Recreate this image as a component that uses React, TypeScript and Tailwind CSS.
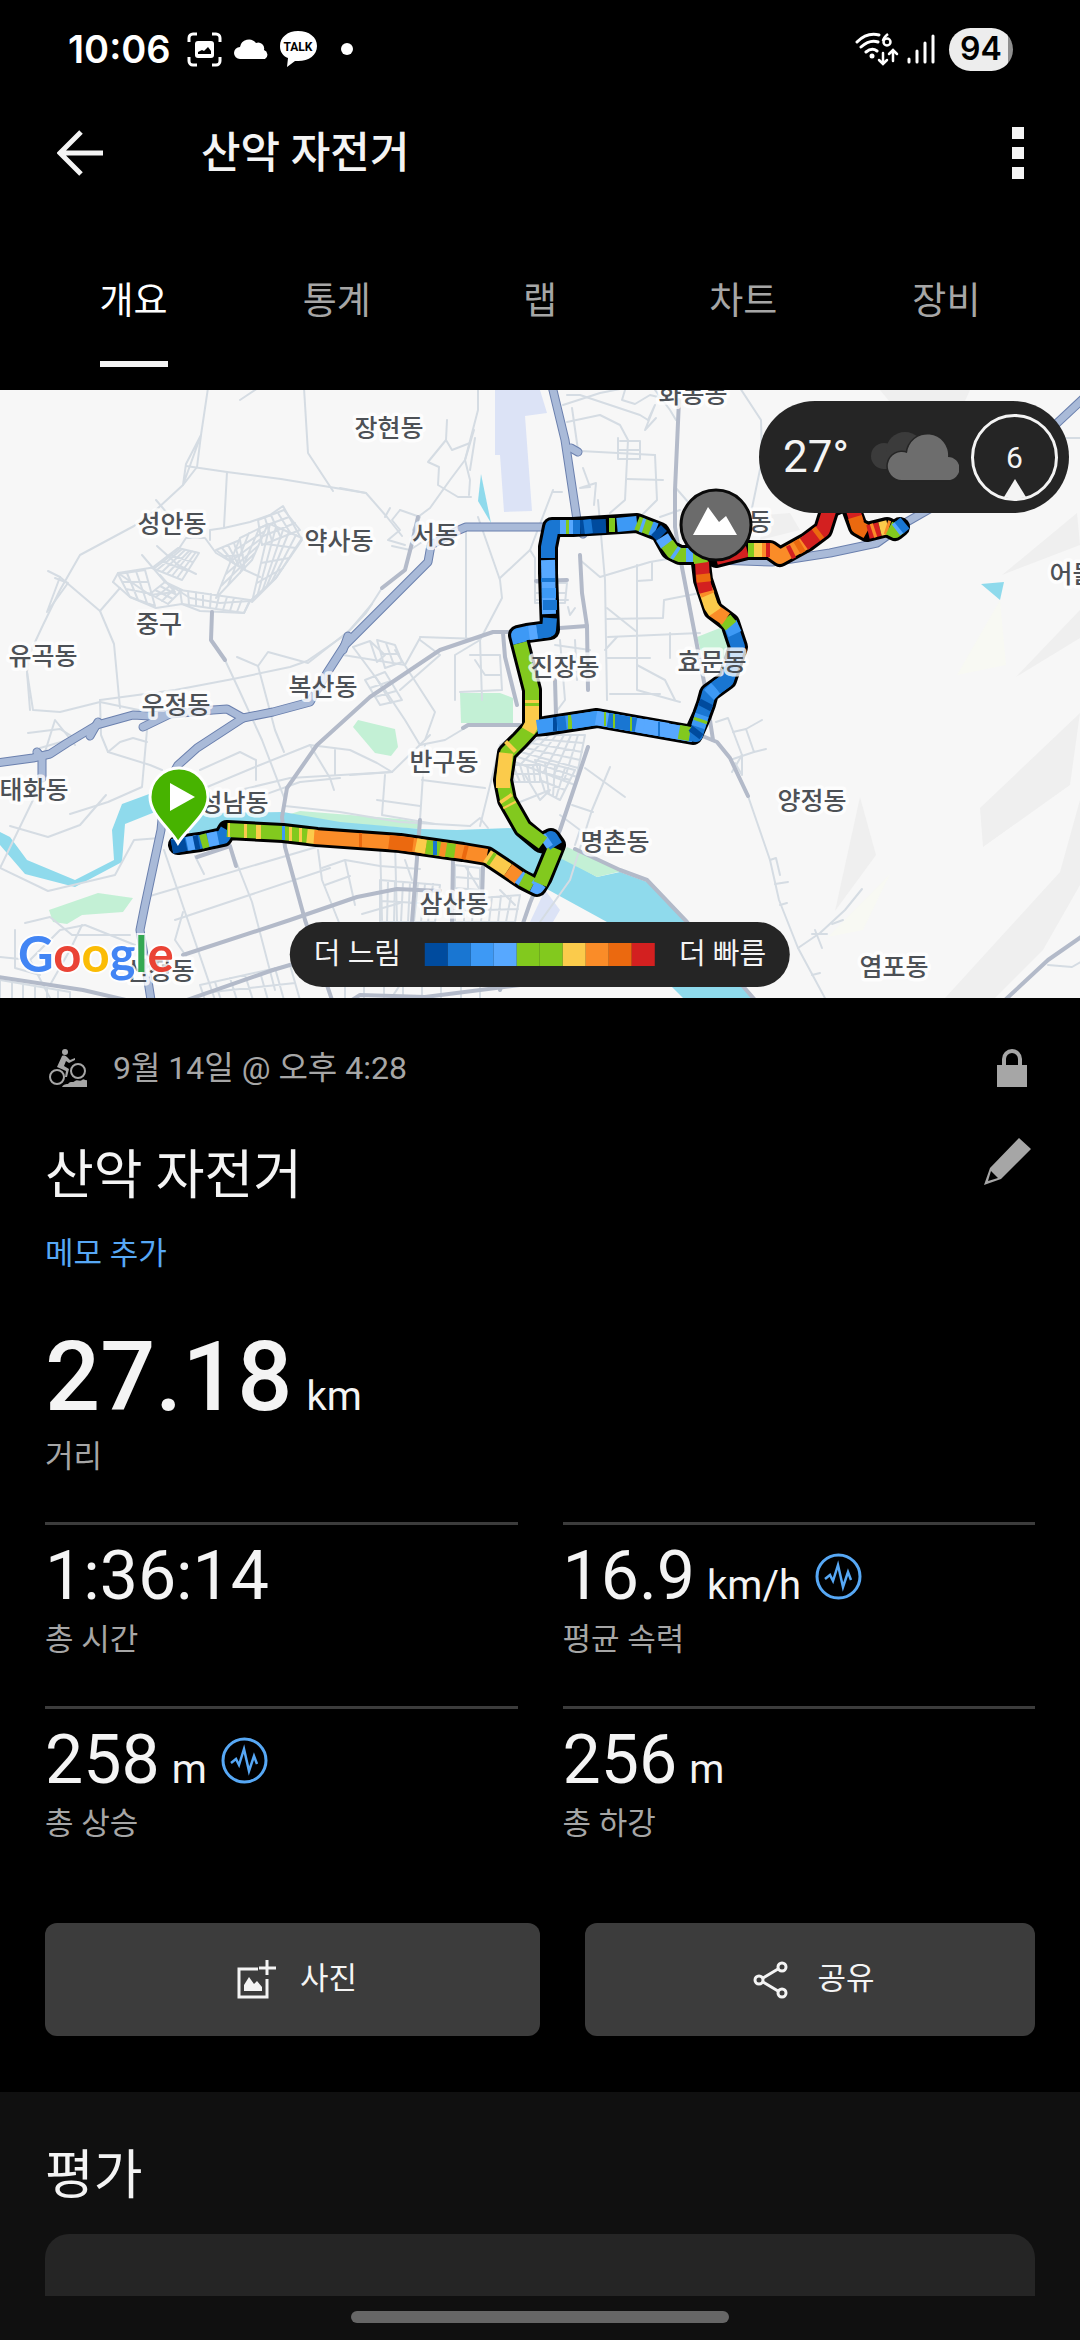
import { useState } from "react";

const TABS = ["개요", "통계", "랩", "차트", "장비"];

const SPEED_COLORS = [
  "bg-[#004b9e]",
  "bg-[#1976d2]",
  "bg-[#3d99f5]",
  "bg-[#57a8ff]",
  "bg-[#82c91e]",
  "bg-[#82c91e]",
  "bg-[#fbcb4b]",
  "bg-[#fa8c28]",
  "bg-[#eb690f]",
  "bg-[#d32020]",
];

const NAVY = "#004b9e";
const BLUE = "#1976d2";
const AZURE = "#3d99f5";
const SKY = "#57a8ff";
const GREEN = "#82c91e";
const YELLOW = "#fbcb4b";
const ORANGE = "#fa8c28";
const BURNT = "#eb690f";
const RED = "#d32020";

const ROUTE = [
  "178,845 200,842 223,837 227,830 283,833 317,837 400,843 463,852 487,856 523,880 537,887 543,877 556,845 551,838 541,843 523,828 507,800 503,780 507,753 520,740 532,727 532,690 520,643 518,635 527,633 550,630 548,573 548,547 552,527 573,527 637,523 660,532 670,550 680,555 702,555",
  "532,727 545,726 597,718 693,735 702,715 706,704 709,693 727,680 738,647 730,623 713,610 703,580 700,555",
  "716,558 747,550 770,550 780,557 807,542 823,530 830,508 848,500 858,527 867,532 887,527 895,531 900,527",
];

// [colour, points]: later entries are painted over earlier ones
const SPEED: [string, string][] = [
  [BLUE, "172,846 178,845 200,842 223,837 227,830"],
  [NAVY, "172,847 186,844"],
  [SKY, "187,844 197,842"],
  [NAVY, "194,843 199,842"],
  [GREEN, "201,842 208,840"],
  [SKY, "208,840 218,838"],
  [GREEN, "227,830 283,833 317,837"],
  [YELLOW, "228,830 230,830"],
  [YELLOW, "244,831 247,831"],
  [YELLOW, "256,832 261,832"],
  [AZURE, "282,833 285,833"],
  [YELLOW, "289,834 292,834"],
  [YELLOW, "299,835 302,835"],
  [YELLOW, "307,836 317,837"],
  [ORANGE, "314,837 400,843 463,852 487,856"],
  [BURNT, "359,840 362,840"],
  [BURNT, "389,842 413,845"],
  [YELLOW, "416,845 426,847"],
  [GREEN, "426,847 455,851"],
  [BLUE, "433,848 437,848"],
  [ORANGE, "440,849 446,850"],
  [BURNT, "463,852 467,853"],
  [YELLOW, "487,856 508,870"],
  [GREEN, "490,858 493,860"],
  [ORANGE, "508,870 519,878"],
  [SKY, "519,877 523,880"],
  [GREEN, "522,879 533,885"],
  [SKY, "533,885 537,887 540,883"],
  [GREEN, "540,884 543,877 555,848"],
  [BLUE, "556,846 551,838 545,842"],
  [SKY, "549,839 543,843"],
  [GREEN, "543,843 523,828 507,800 503,780 507,753 520,740 532,727 532,690 520,643"],
  [YELLOW, "510,806 509,804"],
  [YELLOW, "507,800 505,797"],
  [YELLOW, "503,788 503,780 506,753"],
  [YELLOW, "509,748 512,745"],
  [YELLOW, "528,731 532,724 532,700"],
  [GREEN, "532,706 532,703"],
  [AZURE, "520,643 518,635 527,633 550,630"],
  [BLUE, "537,632 549,630 550,618"],
  [SKY, "529,633 537,632"],
  [SKY, "549,614 548,560"],
  [BLUE, "550,610 550,600"],
  [AZURE, "549,598 549,588"],
  [BLUE, "548,582 548,578"],
  [BLUE, "548,558 548,547 552,527 560,527"],
  [SKY, "560,527 573,527"],
  [GREEN, "566,527 569,527"],
  [NAVY, "580,527 606,526"],
  [BLUE, "584,527 592,526"],
  [GREEN, "609,525 615,525"],
  [AZURE, "617,525 637,523"],
  [BLUE, "573,527 580,527"],
  [GREEN, "637,523 652,529"],
  [SKY, "641,525 644,526"],
  [AZURE, "651,528 656,530"],
  [NAVY, "656,530 662,536"],
  [SKY, "662,537 667,545"],
  [GREEN, "667,544 673,552 680,555 689,555"],
  [SKY, "674,552 677,554"],
  [SKY, "686,555 693,555"],
  [GREEN, "693,555 702,555"],
  [AZURE, "537,727 597,718 693,735"],
  [NAVY, "553,724 557,724"],
  [BLUE, "557,724 566,723"],
  [GREEN, "568,722 572,722"],
  [AZURE, "572,722 597,718"],
  [SKY, "596,718 693,735"],
  [GREEN, "604,719 606,719"],
  [BLUE, "608,720 636,725"],
  [GREEN, "613,721 615,721"],
  [GREEN, "630,724 632,724"],
  [SKY, "644,726 668,730"],
  [BLUE, "658,729 660,729"],
  [GREEN, "679,732 690,734"],
  [BLUE, "690,734 696,735 702,715 706,704 709,693 727,680"],
  [NAVY, "694,735 698,730"],
  [AZURE, "698,727 702,715"],
  [GREEN, "700,722 701,719"],
  [NAVY, "704,708 707,702"],
  [AZURE, "709,695 716,688"],
  [BLUE, "716,688 727,680 738,647 730,623"],
  [AZURE, "732,666 735,657"],
  [AZURE, "735,634 730,623"],
  [GREEN, "731,626 725,619"],
  [ORANGE, "726,619 713,610"],
  [YELLOW, "715,612 711,606 706,591"],
  [ORANGE, "708,595 705,588"],
  [RED, "706,592 703,580 702,562"],
  [BURNT, "704,582 703,574"],
  [GREEN, "701,563 700,556"],
  [RED, "716,558 747,550"],
  [GREEN, "748,550 755,550"],
  [YELLOW, "754,550 764,550"],
  [ORANGE, "762,550 770,550 780,557 807,542"],
  [RED, "766,550 770,550"],
  [RED, "789,553 793,551"],
  [BURNT, "797,548 802,545"],
  [RED, "804,544 823,530 830,508"],
  [BURNT, "816,535 820,532"],
  [RED, "853,510 857,523"],
  [BURNT, "855,517 858,527 867,532"],
  [RED, "868,532 880,529"],
  [ORANGE, "872,531 875,530"],
  [YELLOW, "880,529 888,527"],
  [ORANGE, "886,527 889,528"],
  [GREEN, "889,528 895,531 900,527"],
  [SKY, "896,530 900,527"],
  [BLUE, "899,528 905,523"],
];

const HIGHWAYS = [
  "-4,763 33,758 50,754 67,743 97,725 133,715 150,716 213,710 227,709 243,718 273,712 310,702 327,673 345,645 385,605 428,562 431,545 459,530 466,527 552,527",
  "243,718 197,748 178,765 165,788 161,830 155,858 145,905 140,930 151,1000",
  "552,386 565,440 571,480 577,520 583,534",
  "37,752 42,758 42,778",
  "90,736 98,722",
  "143,727 172,713",
  "571,448 578,452",
  "343,650 348,636",
  "715,560 772,562 830,553 877,543 905,523 940,503 1055,425 1084,398",
];

const MAIN_ROADS = [
  "212,612 211,640 225,660",
  "510,632 493,632 440,650 370,697 317,745 287,788 282,817 285,847 305,920 332,1000",
  "580,555 582,593 587,626 588,690",
  "536,581 567,580",
  "560,628 587,626",
  "503,633 505,657 517,705",
  "679,400 675,490 675,527 680,557 705,687 713,740",
  "700,735 717,742 730,758 748,796",
  "588,747 560,830 530,903 500,990",
  "183,955 290,920 357,897 397,889 440,891",
  "-2,977 83,990 126,1000",
  "187,1000 273,970 300,962",
  "463,728 468,725 520,725",
  "420,820 412,922",
  "453,857 452,922",
  "483,867 482,900",
  "1084,935 1048,960 1005,1000",
  "575,849 620,870 647,880 687,922 755,1000",
  "197,857 230,846 236,866",
  "382,588 405,570 412,543 418,517",
  "555,680 556,715",
  "352,1000 360,995 425,997 520,985",
];

const MINOR_ROADS = [
  "208,388 201,435 197,467 183,485 157,509 134,526 80,555 60,590 43,625 29,655 27,672 33,710 60,712 100,702 163,715",
  "201,435 186,464 183,485 201,435",
  "186,466 227,472 281,479 366,493 387,517 402,536",
  "227,472 224,527",
  "304,388 308,453 333,491",
  "240,400 258,388",
  "48,571 60,577 100,611 114,644 120,708",
  "60,577 47,612 68,583 55,578",
  "100,611 120,588",
  "113,582 118,573 156,567 178,550 186,538 205,538 216,553 245,570 260,577",
  "210,540 210,530 224,528 250,522 270,515 283,506 302,540 276,578 250,601 220,603 190,598 165,582 142,555",
  "113,582 130,597 156,608 182,604 200,611 244,613 250,601",
  "156,500 173,520",
  "157,546 178,565 196,574",
  "118,573 150,595 175,592 160,575",
  "100,700 175,690 233,679 290,667 307,661 345,635 366,613 382,588",
  "225,660 240,692 262,740 285,800",
  "237,657 258,666 268,652 308,663 350,630 372,604",
  "258,666 275,730 284,752",
  "353,647 385,690 405,720 420,745 445,740 470,725",
  "353,647 370,641 385,655 377,662 370,641",
  "27,672 30,710",
  "100,700 101,735 108,752 150,765 162,770",
  "108,752 120,742 133,738 147,742",
  "147,730 142,787 108,802 70,814",
  "28,733 60,729 75,738 40,748",
  "45,752 55,720 75,745",
  "10,826 48,837 80,825 106,795",
  "0,868 48,891 115,875 134,840 160,838",
  "0,868 33,800 45,770",
  "200,770 240,752 256,760 256,780",
  "200,790 260,765 310,745 350,750 377,763 392,772 350,775",
  "240,790 290,778 392,772 430,735",
  "250,800 300,782 340,778",
  "310,745 330,778 334,790",
  "335,750 335,775",
  "385,775 382,815 435,824",
  "285,806 340,812 400,822 470,826",
  "377,800 420,806",
  "422,780 485,788",
  "425,745 420,820",
  "480,826 500,745 520,730",
  "470,826 480,818 488,828",
  "164,850 185,912 215,1000",
  "195,856 204,874",
  "230,846 252,902 275,990",
  "150,896 320,846",
  "175,920 330,868",
  "183,912 175,940 186,956",
  "318,850 322,880 340,925",
  "322,868 345,860 380,866 420,869",
  "325,885 350,876",
  "345,860 355,905",
  "380,840 382,920",
  "395,842 397,922",
  "362,914 400,903",
  "25,923 50,917 72,935 130,935",
  "15,930 15,968 40,975",
  "25,965 60,930 85,925 135,945",
  "50,985 70,950 82,925",
  "0,957 30,960 50,998",
  "478,388 478,410 465,460 450,480 430,508 418,517",
  "447,420 446,440 428,462 439,467 438,485 458,497 471,497",
  "446,440 452,450 470,443",
  "474,430 465,460 470,480 469,495",
  "475,438 470,470",
  "400,510 392,520 400,530 388,540 405,545",
  "400,510 420,517 413,530 425,540 410,550 392,546",
  "366,493 340,488",
  "385,517 390,508",
  "420,637 480,639 482,700",
  "478,517 500,580 502,598 480,640 455,655 455,700",
  "466,530 466,640",
  "500,578 530,550 553,490",
  "530,550 535,558 535,600 568,600",
  "567,395 580,395 640,415 648,420",
  "563,405 600,393 625,388",
  "567,422 600,415 620,425 628,440 625,500 610,513",
  "572,408 578,450",
  "580,451 655,455",
  "620,441 640,441 640,459 618,459 618,438",
  "618,450 640,450",
  "655,455 657,500 640,517",
  "627,479 663,480",
  "625,390 622,400 635,404 650,395 670,400",
  "648,420 655,405 645,430 656,418",
  "655,390 670,410 676,420",
  "583,468 590,487 580,488 596,483 594,505",
  "553,492 562,492",
  "675,487 695,510",
  "660,517 680,510",
  "598,500 605,580 607,700",
  "580,560 600,577 650,562 690,555",
  "637,565 637,690 680,702",
  "637,581 652,580 652,563",
  "607,608 637,632",
  "607,619 663,618 664,600 700,593",
  "608,637 700,633",
  "607,658 650,658",
  "617,637 605,650",
  "670,633 670,658",
  "637,665 665,680 675,700",
  "610,694 660,694",
  "560,640 565,700 556,712",
  "568,607 570,615 575,608",
  "555,645 590,650",
  "555,655 590,660",
  "575,640 577,680",
  "470,655 500,655 502,690 460,692",
  "475,660 485,675 500,675",
  "343,655 405,665 420,638",
  "395,650 435,712 425,740",
  "400,690 440,655 420,640",
  "716,722 728,718 742,755 742,775 735,763",
  "733,732 746,729 762,720",
  "746,729 754,752 766,749",
  "754,752 730,760",
  "742,755 732,772",
  "748,796 770,860 779,900 798,948 826,1000",
  "770,860 776,858 780,875",
  "775,884 788,882",
  "780,905 787,903",
  "798,948 820,933 845,910 862,889",
  "815,930 822,948",
  "812,934 827,934",
  "832,924 843,920",
  "812,975 820,973",
  "1048,965 1072,967 1084,960",
  "510,806 550,790 540,800 525,775",
  "585,768 625,797",
  "610,767 592,810 570,880 540,922",
  "572,805 593,812",
  "560,815 580,830 575,845",
  "740,388 761,420 762,460 752,508",
  "1060,438 1084,438",
  "405,860 412,880",
  "465,866 480,890",
  "500,890 515,905",
  "430,940 390,1000",
];

// street blocks: corners clockwise from the top left, then columns and rows
const BLOCKS: [number[], number, number][] = [
  [[178, 548, 199, 553, 182, 580, 152, 568], 6, 3],
  [[118, 574, 145, 570, 155, 606, 130, 597], 3, 3],
  [[150, 594, 165, 582, 182, 590, 168, 604], 3, 3],
  [[240, 538, 268, 524, 252, 560, 216, 598], 3, 5],
  [[270, 524, 302, 538, 276, 578, 252, 602], 5, 4],
  [[258, 520, 284, 510, 300, 530, 262, 545], 4, 3],
  [[216, 550, 240, 540, 245, 570, 232, 562], 4, 2],
  [[180, 590, 250, 600, 244, 613, 182, 604], 9, 1],
  [[542, 735, 585, 735, 575, 785, 510, 760], 6, 6],
  [[535, 760, 575, 770, 560, 800, 545, 792], 4, 3],
  [[500, 765, 540, 765, 540, 782, 510, 782], 6, 2],
  [[535, 583, 567, 583, 565, 603, 535, 603], 3, 2],
  [[377, 640, 395, 645, 402, 662, 385, 668], 2, 2],
  [[365, 680, 385, 672, 402, 700, 380, 705], 2, 3],
  [[380, 880, 440, 885, 435, 922, 380, 922], 8, 2],
  [[455, 900, 520, 895, 515, 922, 455, 922], 7, 2],
  [[455, 865, 480, 868, 480, 890, 455, 888], 2, 2],
  [[0, 980, 70, 992, 70, 1004, 0, 1004], 6, 1],
  [[345, 985, 480, 985, 480, 1000, 345, 1000], 7, 1],
  [[200, 985, 290, 965, 300, 1000, 205, 1000], 6, 2],
];

const PLACES: [string, number, number][] = [
  ["화봉동", 693, 403],
  ["장현동", 389, 437],
  ["성안동", 172, 533],
  ["약사동", 339, 550],
  ["서동", 435, 544],
  ["송정동", 737, 531],
  ["어물동", 1084, 583],
  ["중구", 159, 633],
  ["유곡동", 43, 665],
  ["진장동", 565, 676],
  ["효문동", 712, 671],
  ["복산동", 323, 696],
  ["우정동", 176, 714],
  ["반구동", 444, 771],
  ["태화동", 34, 799],
  ["성남동", 234, 812],
  ["양정동", 812, 810],
  ["명촌동", 615, 851],
  ["삼산동", 454, 913],
  ["염포동", 894, 976],
  ["신정동", 160, 980],
];

function blockPath(c: number[], cols: number, rows: number) {
  const mix = (a: number, b: number, t: number) => Math.round(a + (b - a) * t);
  let d = "";
  for (let i = 0; i <= cols; i++) {
    const t = i / cols;
    d += `M${mix(c[0], c[2], t)} ${mix(c[1], c[3], t)}L${mix(c[6], c[4], t)} ${mix(c[7], c[5], t)}`;
  }
  for (let i = 0; i <= rows; i++) {
    const t = i / rows;
    d += `M${mix(c[0], c[6], t)} ${mix(c[1], c[7], t)}L${mix(c[2], c[4], t)} ${mix(c[3], c[5], t)}`;
  }
  return d;
}

function RouteMap() {
  return (
    <svg
      viewBox="0 390 1080 608"
      className="block w-full bg-[#f7f7f7]"
      role="img"
      aria-label="경로 지도"
    >
      {/* Terrain */}
      <g fill="#efefef">
        <path d="M1080 713 980 808 983 847 1070 785Z" />
        <path d="M1080 800 1060 872 945 998H995L1043 950 1080 885Z" />
        <path d="M860 797 876 855 835 911Z" />
        <path d="M1077 513 1002 575 1080 545Z" />
        <path d="M1080 610 1016 677 1080 638Z" />
        <path d="M880 390H970L965 401 890 402Z" />
        <path d="M765 515 790 513 800 530 760 540Z" />
      </g>
      <g fill="#f8f9f3">
        <path d="M1000 600 1006 665 957 675Z" />
        <path d="M890 874 863 930 828 937Z" />
      </g>

      {/* Parks */}
      <g fill="#c3f0d5">
        <path d="M49 910 98 893 133 898 123 912 82 915 67 924 53 922Z" />
        <path d="M353 727 358 720 395 729 398 747 391 756 375 753Z" />
        <path d="M460 693H500L513 698V723H461Z" />
        <path d="M287 815 300 811 400 819 420 822V829L300 820Z" />
        <path d="M697 637 720 628 735 645 733 665 702 655Z" />
      </g>
      <path
        fill="#dce3f6"
        d="M495 390H540L547 413 525 416 532 511 504 512 500 455H495ZM530 922 545 890 560 910 553 922Z"
      />

      {/* Water */}
      <g fill="#8fdaec">
        <path d="M0 832 10 837 27 860 75 880 114 860 112 830 122 804 160 790V810L125 824 122 862 75 887 25 874 0 845Z" />
        <path d="M185 820 207 813 283 812 340 822 420 829 457 830 513 828 545 850 560 856 597 877 620 872 647 882 687 922 753 998H683L607 922 545 888 490 860 440 852 190 835Z" />
        <path d="M481 474 478 501 491 523Z" />
        <path d="M981 584 1004 582 1000 600Z" />
      </g>
      <path fill="#c3f0d5" d="M567 847 622 871 597 877 560 858Z" />

      {/* Roads */}
      <g fill="none" strokeLinecap="round" strokeLinejoin="round">
        <g stroke="#d5dce3" strokeWidth={2}>
          {MINOR_ROADS.map((points) => (
            <polyline key={points} points={points} />
          ))}
          {BLOCKS.map(([corners, cols, rows]) => (
            <path key={corners.join()} d={blockPath(corners, cols, rows)} />
          ))}
        </g>
        <g stroke="#b3bac9" strokeWidth={4}>
          {MAIN_ROADS.map((points) => (
            <polyline key={points} points={points} />
          ))}
        </g>
        <g stroke="#6b80ae" strokeWidth={9}>
          {HIGHWAYS.map((points) => (
            <polyline key={points} points={points} />
          ))}
        </g>
        <g stroke="#a9bad8" strokeWidth={7}>
          {HIGHWAYS.map((points) => (
            <polyline key={points} points={points} />
          ))}
        </g>
      </g>

      {/* Ride, coloured by speed */}
      <g fill="none" strokeLinejoin="round">
        <g stroke="#000" strokeWidth={20} strokeLinecap="round">
          {ROUTE.map((points) => (
            <polyline key={points} points={points} />
          ))}
        </g>
        <g strokeWidth={14}>
          {SPEED.map(([color, points]) => (
            <polyline key={color + points} stroke={color} points={points} />
          ))}
        </g>
      </g>

      {/* Place names */}
      <g
        className="font-['Noto_Sans_CJK_KR',sans-serif] text-[25px] font-medium"
        fill="#4d5156"
        stroke="#fff"
        strokeOpacity={0.8}
        strokeWidth={7}
        strokeLinejoin="round"
        paintOrder="stroke"
        textAnchor="middle"
      >
        {PLACES.map(([name, x, y]) => (
          <text key={name} x={x} y={y}>
            {name}
          </text>
        ))}
      </g>

      {/* Summit marker */}
      <circle cx="716" cy="525" r="35" fill="#6b6b6b" stroke="#0a0a0a" strokeWidth="3" />
      <path fill="#fff" d="M693 535 708 507 719 522 726 516 737 535Z" />

      {/* Start marker */}
      <path
        fill="#47b300"
        stroke="#fff"
        strokeWidth="3"
        d="M178 843C170 828 150 815 150 797A29 29 0 0 1 208 797C208 815 187 828 178 843Z"
      />
      <path fill="#fff" d="M170 783 195 797 170 811Z" />
    </svg>
  );
}

function WeatherPill() {
  return (
    <div className="absolute top-[11px] right-[11px] flex h-28 w-[310px] items-center rounded-full bg-[#252525] pr-[11px] pl-6 text-[#f4f4f4]">
      <span className="flex-1 text-[44px] leading-none">27°</span>
      <svg viewBox="0 0 88 50" className="mr-3 h-[50px] w-[88px]" aria-hidden="true">
        <g fill="#3b3b3b">
          <circle cx="13" cy="24" r="13" />
          <circle cx="34" cy="19" r="19" />
          <path d="M12 20h30v17H12Z" />
        </g>
        <path
          d="M31 48a14 14 0 1 1 5-27 20 20 0 0 1 41 4A11 11 0 0 1 77 48Z"
          fill="#6d6d6d"
          stroke="#252525"
          strokeWidth="3"
          paintOrder="stroke"
        />
      </svg>
      <span className="relative flex size-[87px] items-center justify-center rounded-full border-3 border-[#f4f4f4] text-[30px]">
        6
        <svg viewBox="0 0 22 19" className="absolute bottom-0 h-[19px] w-[22px]" aria-hidden="true">
          <path d="M11 0 22 18Q11 21 0 18Z" fill="#f4f4f4" />
        </svg>
      </span>
    </div>
  );
}

function SpeedLegend() {
  return (
    <div className="absolute bottom-[11px] left-1/2 flex h-[65px] -translate-x-1/2 items-center gap-6 rounded-full bg-[#252525] px-6 text-[29px] whitespace-nowrap text-[#f4f4f4]">
      <span>더 느림</span>
      <span className="flex">
        {SPEED_COLORS.map((color, i) => (
          <span key={i} className={`size-[23px] ${color}`} />
        ))}
      </span>
      <span>더 빠름</span>
    </div>
  );
}

function StatusBar() {
  return (
    <div className="flex h-[98px] items-center justify-between pr-[67px] pl-[68px] text-white">
      <div className="flex items-center">
        <span className="font-[Inter,sans-serif] text-[38px] font-semibold">10:06</span>
        <svg viewBox="0 0 35 35" className="ml-4 size-[35px]" fill="none" aria-hidden="true">
          <path
            d="M2 10V6a4 4 0 0 1 4-4h4M25 2h4a4 4 0 0 1 4 4v4M33 25v4a4 4 0 0 1-4 4h-4M10 33H6a4 4 0 0 1-4-4v-4"
            stroke="#fff"
            strokeWidth="3"
          />
          <rect x="8" y="9" width="19" height="17" rx="3" fill="#fff" />
          <path d="M11 22v-2l4-2 2 1 4-4 3 4v3Z" fill="#000" />
        </svg>
        <svg viewBox="0 0 36 20" className="ml-3 h-5 w-9" aria-hidden="true">
          <path d="M6 20a6 6 0 0 1 0-12A9 9 0 0 1 22 4a6 6 0 0 1 8 7 5 5 0 0 1 1 9Z" fill="#fff" />
        </svg>
        <svg viewBox="0 0 37 36" className="ml-[10px] h-9 w-[37px]" aria-hidden="true">
          <path
            d="M18 0C8 0 0 6 0 15c0 6 3 10 8 12L7 36l8-6h3c11 0 19-6 19-15S29 0 18 0Z"
            fill="#fff"
          />
          <text
            x="18"
            y="20"
            textAnchor="middle"
            className="font-[Roboto,sans-serif] text-[12px] font-bold"
          >
            TALK
          </text>
        </svg>
        <span className="ml-6 size-3 rounded-full bg-white" />
      </div>

      <div className="flex items-center">
        <svg viewBox="0 0 44 34" className="h-[34px] w-11" fill="none" aria-hidden="true">
          <g stroke="#fff" strokeWidth="3" strokeLinecap="round">
            <path d="M2 10Q12 0 24 3M6 15Q15 7 23 10M11 20Q17 15 22 19" />
            <path d="M28 21v10M24 28l4 4 4-4M38 29V19M34 22l4-4 4 4" strokeWidth="2.5" />
          </g>
          <circle cx="17" cy="24" r="2.5" fill="#fff" />
          <path d="M33 2q-5 4-5 7" stroke="#fff" strokeWidth="2.5" />
          <circle cx="32" cy="10" r="3.5" stroke="#fff" strokeWidth="2.5" />
        </svg>
        <svg viewBox="0 0 28 30" className="ml-2 h-[30px] w-7" aria-hidden="true">
          <path
            d="M2 25v3M10 17v11M18 9v19M26 2v26"
            stroke="#fff"
            strokeWidth="3"
            strokeLinecap="round"
          />
        </svg>
        <span className="ml-[14px] flex h-[43px] w-16 items-center justify-center overflow-hidden rounded-full bg-linear-to-r from-[#ededed] from-92% to-[#8f8f8f] to-92% font-[Inter,sans-serif] text-[32px] font-semibold text-black">
          94
        </span>
      </div>
    </div>
  );
}

function PulseIcon() {
  return (
    <svg viewBox="0 0 47 47" className="size-[47px]" fill="none" stroke="#57a8f5" aria-hidden="true">
      <circle cx="23.5" cy="23.5" r="21.5" strokeWidth="3" />
      <path d="M10 26l5-4 3 6 5-16 5 22 5-15 3 8" strokeWidth="2.5" />
    </svg>
  );
}

interface StatProps {
  value: string;
  unit?: string;
  label: string;
  chart?: boolean;
}

function Stat({ value, unit, label, chart }: StatProps) {
  return (
    <div className="border-t-3 border-[#3c3c3c] pt-[15px]">
      <dd className="flex h-[72px] items-center gap-[14px]">
        <span className="flex items-baseline gap-3">
          <span className="text-[68px] leading-[72px]">{value}</span>
          {unit && <span className="text-[40px] leading-none">{unit}</span>}
        </span>
        {chart && (
          <button type="button" aria-label={`${label} 차트`}>
            <PulseIcon />
          </button>
        )}
      </dd>
      <dt className="mt-2 text-[31px] leading-10 text-[#a6a6a6]">{label}</dt>
    </div>
  );
}

export default function App() {
  const [activeTab, setActiveTab] = useState("개요");

  return (
    <div className="flex min-h-screen flex-col bg-black font-[Roboto,'Noto_Sans_CJK_KR',sans-serif] text-[#f4f4f4]">
      <StatusBar />

      <header className="flex h-[110px] items-center pr-14 pl-[57px]">
        <button type="button" aria-label="뒤로">
          <svg viewBox="0 0 46 46" className="size-[46px]" fill="none" aria-hidden="true">
            <path d="M24 2 3 23l21 21M3 23h43" stroke="#f4f4f4" strokeWidth="5" />
          </svg>
        </button>
        <h1 className="ml-[98px] flex-1 text-[43px] font-medium">산악 자전거</h1>
        <button type="button" aria-label="더보기" className="flex flex-col gap-2">
          <span className="size-3 bg-[#f4f4f4]" />
          <span className="size-3 bg-[#f4f4f4]" />
          <span className="size-3 bg-[#f4f4f4]" />
        </button>
      </header>

      <nav className="grid grid-cols-5 px-8 pt-[66px] pb-[23px]">
        {TABS.map((tab) => (
          <button
            key={tab}
            type="button"
            onClick={() => setActiveTab(tab)}
            className={`flex flex-col items-center gap-[31px] text-[37px] leading-14 ${
              activeTab === tab ? "text-white" : "text-[#a6a6a6]"
            }`}
          >
            {tab}
            <span className={`h-[6px] w-[68px] ${activeTab === tab ? "bg-[#f4f4f4]" : ""}`} />
          </button>
        ))}
      </nav>

      <section className="relative">
        <RouteMap />
        <WeatherPill />
        <SpeedLegend />
        <span className="absolute bottom-[15px] left-[18px] font-[Lato,sans-serif] text-[49px] leading-[60px] font-bold [paint-order:stroke] [-webkit-text-stroke:4px_#fffc]">
          <span className="text-[#4285f4]">G</span>
          <span className="text-[#ea4335]">o</span>
          <span className="text-[#fbbc05]">o</span>
          <span className="text-[#4285f4]">g</span>
          <span className="text-[#34a853]">l</span>
          <span className="text-[#ea4335]">e</span>
        </span>
      </section>

      <main className="px-[45px] pb-14">
        <div className="mt-[46px] flex h-12 items-center text-[32px] text-[#a6a6a6]">
          <svg viewBox="0 0 40 40" className="ml-1 size-10" fill="none" aria-hidden="true">
            <g stroke="#a6a6a6" strokeWidth="2">
              <circle cx="8" cy="29" r="7" />
              <circle cx="29" cy="23" r="7" />
            </g>
            <circle cx="16" cy="4" r="3" fill="#a6a6a6" />
            <path d="M13 8c2-1 4 0 5 1l3 3 5-2v2l-6 3-3-2-2 5 5 3-2 8h-2l1-6-9-4Z" fill="#a6a6a6" />
            <path d="M13 39c2-4 6-2 7-4s4 0 6-2 5 1 7-1 3 1 5 0v7Z" fill="#a6a6a6" />
          </svg>
          <span className="ml-6 flex-1">9월 14일 @ 오후 4:28</span>
          <svg viewBox="0 0 30 38" className="mr-2 h-[38px] w-[30px]" fill="none" aria-label="비공개">
            <path d="M7 17V10a8 8 0 0 1 16 0v7" stroke="#a6a6a6" strokeWidth="4" />
            <path d="M0 16h30v22H0Z" fill="#a6a6a6" />
          </svg>
        </div>

        <div className="mt-[46px] flex items-start justify-between">
          <h2 className="text-[53px] leading-[76px]">산악 자전거</h2>
          <button type="button" aria-label="편집" className="mr-1">
            <svg viewBox="0 0 47 47" className="size-[47px]" aria-hidden="true">
              <path
                d="M35 0 47 11 17 41 0 47 6 30ZM7 33 4 43 14 40Z"
                fill="#a6a6a6"
                fillRule="evenodd"
              />
            </svg>
          </button>
        </div>
        <button type="button" className="mt-5 block text-[31px] leading-10 text-[#57a8f5]">
          메모 추가
        </button>

        <dl>
          <dd className="mt-[55px] flex items-baseline gap-[14px]">
            <span className="text-[97px] leading-[96px] font-medium">27.18</span>
            <span className="text-[40px] leading-none">km</span>
          </dd>
          <dt className="mt-3 text-[31px] leading-10 text-[#a6a6a6]">거리</dt>
        </dl>

        <dl className="mt-[45px] grid grid-cols-2 gap-x-[45px] gap-y-[46px]">
          <Stat value="1:36:14" label="총 시간" />
          <Stat value="16.9" unit="km/h" label="평균 속력" chart />
          <Stat value="258" unit="m" label="총 상승" chart />
          <Stat value="256" unit="m" label="총 하강" />
        </dl>

        <div className="mt-[79px] grid grid-cols-[11fr_10fr] gap-x-[45px] text-[31px]">
          <button
            type="button"
            className="flex h-[113px] items-center justify-center gap-6 rounded-xl bg-[#3c3c3c] pl-2"
          >
            <svg viewBox="0 0 40 40" className="size-10" fill="none" aria-hidden="true">
              <path
                d="M22 9H3v28h28V19M31 0v15M23 8h17"
                stroke="#f4f4f4"
                strokeWidth="3"
              />
              <path d="M8 31v-6l5-8 5 7 3-3 5 6v4Z" fill="#f4f4f4" />
            </svg>
            사진
          </button>
          <button
            type="button"
            className="flex h-[113px] items-center justify-center gap-7 rounded-xl bg-[#3c3c3c] pl-2"
          >
            <svg viewBox="0 0 36 38" className="h-[38px] w-9" fill="none" aria-hidden="true">
              <g stroke="#f4f4f4" strokeWidth="3">
                <circle cx="6" cy="19" r="4" />
                <circle cx="29" cy="6" r="4" />
                <circle cx="29" cy="32" r="4" />
                <path d="M10 17 25 8M10 21l15 9" />
              </g>
            </svg>
            공유
          </button>
        </div>
      </main>

      <section className="flex-1 bg-[#101010] px-[45px] pt-12">
        <h2 className="text-[53px] leading-[72px]">평가</h2>
        <div className="mt-[22px] h-[62px] rounded-t-3xl bg-[#252525]" />
        <div className="flex h-[42px] items-center justify-center">
          <span className="h-3 w-[378px] rounded-full bg-[#666]" />
        </div>
      </section>
    </div>
  );
}
